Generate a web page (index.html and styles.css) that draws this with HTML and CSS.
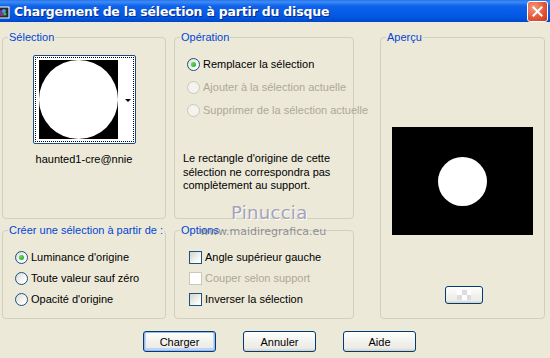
FILE: index.html
```html
<!DOCTYPE html>
<html lang="fr">
<head>
    <meta charset="UTF-8">
    <title>Chargement de la sélection à partir du disque</title>
    <link rel="stylesheet" href="styles.css">
</head>
<body>
    <div class="window">
        <!-- Title bar -->
        <div class="titlebar">
            <svg class="app-icon" width="12" height="14" viewBox="0 0 12 14">
                <rect x="0" y="2" width="11" height="11" fill="#2b2b2b" stroke="#fff" stroke-width="1"/>
                <circle cx="4" cy="8" r="3" fill="#7a3a8a"/>
                <circle cx="6" cy="6" r="2" fill="#3aa0e0"/>
                <circle cx="7" cy="9" r="1.5" fill="#40c040"/>
            </svg>
            <span class="title">Chargement de la sélection à partir du disque</span>
            <button class="close-btn" aria-label="Fermer">
                <svg width="11" height="11" viewBox="0 0 11 11">
                    <path d="M1.5 1.5 L9.5 9.5 M9.5 1.5 L1.5 9.5" stroke="#fff" stroke-width="2" stroke-linecap="square"/>
                </svg>
            </button>
        </div>

        <div class="content">
            <div class="groups">
                <!-- Sélection -->
                <fieldset class="group group-selection">
                    <legend>Sélection</legend>
                    <div class="thumb">
                        <div class="thumb-focus">
                            <div class="thumb-img"><div class="thumb-circle"></div></div>
                            <span class="thumb-arrow"></span>
                        </div>
                    </div>
                    <div class="thumb-label">haunted1-cre@nnie</div>
                </fieldset>

                <!-- Opération -->
                <fieldset class="group group-operation">
                    <legend>Opération</legend>
                    <div class="options-list">
                        <label class="opt"><span class="radio checked"></span>Remplacer la sélection</label>
                        <label class="opt disabled"><span class="radio"></span>Ajouter à la sélection actuelle</label>
                        <label class="opt disabled"><span class="radio"></span>Supprimer de la sélection actuelle</label>
                    </div>
                    <p class="note">Le rectangle d'origine de cette sélection ne correspondra pas complètement au support.</p>
                </fieldset>

                <!-- Aperçu -->
                <fieldset class="group group-preview">
                    <legend>Aperçu</legend>
                    <div class="preview"><div class="preview-circle"></div></div>
                    <button class="btn small-btn" aria-label="Arrière-plan">
                        <span class="checker"></span>
                    </button>
                </fieldset>

                <!-- Créer une sélection à partir de -->
                <fieldset class="group group-source">
                    <legend>Créer une sélection à partir de :</legend>
                    <div class="options-list">
                        <label class="opt"><span class="radio checked"></span>Luminance d'origine</label>
                        <label class="opt"><span class="radio"></span>Toute valeur sauf zéro</label>
                        <label class="opt"><span class="radio"></span>Opacité d'origine</label>
                    </div>
                </fieldset>

                <!-- Options -->
                <fieldset class="group group-options">
                    <legend>Options</legend>
                    <div class="options-list">
                        <label class="opt"><span class="check"></span>Angle supérieur gauche</label>
                        <label class="opt disabled"><span class="check"></span>Couper selon support</label>
                        <label class="opt"><span class="check"></span>Inverser la sélection</label>
                    </div>
                </fieldset>
            </div>

            <div class="buttons">
                <button class="btn default">Charger</button>
                <button class="btn">Annuler</button>
                <button class="btn">Aide</button>
            </div>

            <!-- Watermark over the dialog -->
            <div class="watermark">
                <span class="wm-name">Pinuccia</span>
                <span class="wm-url">www.maidiregrafica.eu</span>
            </div>
        </div>
    </div>
</body>
</html>
```

FILE: styles.css
```css
body {
    margin: 0;
    font-family: "Liberation Sans", Arial, sans-serif;
    font-size: 11px;
    background-color: #ece9d8;
}

.window {
    width: 550px;
    height: 358px;
    background-color: #ece9d8;
    overflow: hidden;
}

/* Title bar */
.titlebar {
    height: 22px;
    display: flex;
    align-items: center;
    background: linear-gradient(#2a74e8 0, #3c8cf8 2px, #0f62ea 6px, #055be6 14px, #0053dc 19px, #0047c6 22px);
    color: #fff;
}

.app-icon {
    margin-left: -2px;
    margin-top: 1px;
}

.title {
    margin-left: 4px;
    font-family: "DejaVu Sans", sans-serif;
    font-weight: bold;
    font-size: 12.5px;
    letter-spacing: -0.2px;
    text-shadow: 1px 1px 0 #0a2a80;
}

.close-btn {
    margin-left: auto;
    margin-right: 2px;
    width: 21px;
    height: 21px;
    padding: 0;
    border: 1px solid #fff;
    border-radius: 3px;
    background: radial-gradient(circle at 30% 30%, #f39a7a, #e2593a 55%, #c8381a);
    display: flex;
    align-items: center;
    justify-content: center;
}

/* Content */
.content {
    position: relative;
    padding: 9px 0 0 2px;
}

.groups {
    display: grid;
    grid-template-columns: 164px 180px 183px;
    grid-template-rows: 188px 95px;
    column-gap: 8px;
    row-gap: 5px;
}

.group-selection { grid-column: 1; grid-row: 1; }
.group-operation { grid-column: 2; grid-row: 1; }
.group-source { grid-column: 1; grid-row: 2; }
.group-options { grid-column: 2; grid-row: 2; }

.group {
    margin: 0;
    padding: 0;
    min-width: 0;
    border: 1px solid #d0d0bf;
    border-radius: 4px;
    display: flex;
    flex-direction: column;
}

.group-preview {
    grid-column: 3;
    grid-row: 1 / 3;
    margin-left: 18px;
}

.group legend {
    margin-left: 5px;
    padding: 0 1px;
    color: #0046d5;
    font-size: 11px;
    line-height: 13px;
}

/* Selection thumbnail */
.thumb {
    align-self: center;
    margin-top: 11px;
    width: 99px;
    height: 85px;
    border: 1px solid #1c4c86;
    border-radius: 2px;
    padding: 1px;
    background: #fff;
}

.thumb-focus {
    height: 100%;
    box-sizing: border-box;
    border: 1px dotted #000;
    display: flex;
    align-items: center;
    padding-left: 3px;
}

.thumb-img {
    width: 79px;
    height: 79px;
    background: #000;
    display: flex;
}

.thumb-circle {
    flex: 1;
    border-radius: 50%;
    background: #fff;
}

.thumb-arrow {
    margin-left: 7px;
    margin-top: 2px;
    width: 0;
    height: 0;
    border-left: 3px solid transparent;
    border-right: 3px solid transparent;
    border-top: 3px solid #000;
}

.thumb-label {
    margin-top: 9px;
    text-align: center;
    line-height: 13px;
}

/* Radio and checkbox rows */
.options-list {
    display: flex;
    flex-direction: column;
    gap: 10px;
    margin-top: 14px;
    padding-left: 12px;
}

.group-source .options-list,
.group-options .options-list {
    gap: 8px;
    margin-top: 14px;
}

.group-options .options-list {
    padding-left: 14px;
}

.opt {
    display: flex;
    align-items: center;
    height: 13px;
    line-height: 13px;
    white-space: nowrap;
}

.opt.disabled {
    color: #aca899;
}

.radio {
    box-sizing: border-box;
    flex-shrink: 0;
    width: 13px;
    height: 13px;
    margin-right: 3px;
    border: 1px solid #1c5180;
    border-radius: 50%;
    background: linear-gradient(135deg, #dcdcd5, #fff 80%);
    display: flex;
    align-items: center;
    justify-content: center;
}

.radio.checked::after {
    content: "";
    width: 5px;
    height: 5px;
    border-radius: 50%;
    background: radial-gradient(circle at 35% 35%, #5fdc5f, #21a121);
}

.disabled .radio {
    border-color: #cac8bb;
    background: #f4f3ee;
}

.check {
    box-sizing: border-box;
    flex-shrink: 0;
    width: 13px;
    height: 13px;
    margin-right: 3px;
    border: 1px solid #1c5180;
    background: linear-gradient(135deg, #d4d4cc, #fff 85%);
}

.disabled .check {
    border-color: #cac8bb;
    background: #fff;
}

.note {
    margin: 35px 0 0 8px;
    line-height: 13.5px;
}

/* Preview */
.preview {
    align-self: center;
    margin-top: 83px;
    width: 141px;
    height: 108px;
    background: #000;
    display: flex;
    align-items: center;
    justify-content: center;
}

.preview-circle {
    width: 49px;
    height: 49px;
    border-radius: 50%;
    background: #fff;
}

/* Bottom buttons */
.buttons {
    display: flex;
    gap: 27px;
    margin-top: 12px;
    padding-left: 141px;
}

.btn {
    box-sizing: border-box;
    width: 73px;
    height: 21px;
    padding: 0;
    border: 1px solid #003c74;
    border-radius: 3px;
    background: linear-gradient(#fff, #f4f4f0 40%, #ecebe6 85%, #d6d0c5);
    font-family: "Liberation Sans", Arial, sans-serif;
    font-size: 11px;
    color: #000;
}

.btn.default {
    box-shadow: inset 0 0 0 1px #9ab9ef, inset 0 -1px 0 2px #c1d3fb;
}

.btn.small-btn {
    align-self: center;
    margin-top: 51px;
    margin-left: 3px;
    width: 38px;
    height: 18px;
    display: flex;
    align-items: center;
    justify-content: center;
}

.checker {
    width: 14px;
    height: 10px;
    background:
        linear-gradient(45deg, #dcdcdc 25%, transparent 25%, transparent 75%, #dcdcdc 75%),
        linear-gradient(45deg, #dcdcdc 25%, #fff 25%, #fff 75%, #dcdcdc 75%);
    background-size: 10px 10px;
    background-position: 0 0, 5px 5px;
}

/* Watermark */
.watermark {
    position: absolute;
    left: 200px;
    top: 180px;
    display: flex;
    flex-direction: column;
    align-items: flex-start;
    pointer-events: none;
}

.wm-name {
    margin-left: 31px;
    font-family: "DejaVu Sans", sans-serif;
    font-size: 18px;
    color: #a3a3ba;
    letter-spacing: 0.3px;
    text-shadow: 1px 1px 0 #fff;
}

.wm-url {
    margin-top: 2px;
    font-family: "DejaVu Sans", sans-serif;
    font-size: 11px;
    color: rgba(110, 110, 130, 0.75);
}
```
